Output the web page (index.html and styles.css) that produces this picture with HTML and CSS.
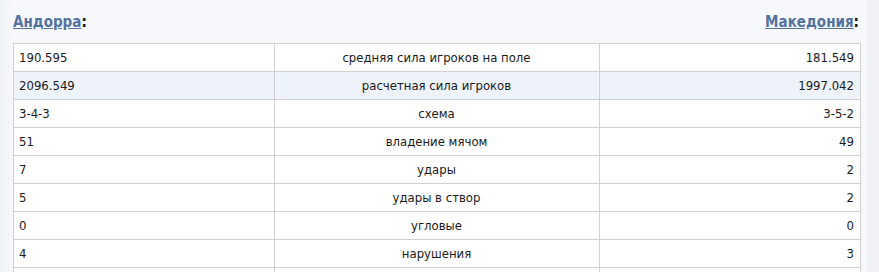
FILE: index.html
```html
<!DOCTYPE html>
<html lang="ru">
<head>
<meta charset="utf-8">
<title>Сравнение команд</title>
<link rel="stylesheet" href="styles.css">
</head>
<body>
<div class="panel">
  <div class="teams">
    <div class="team"><a href="#" class="team-link">Андорра</a>:</div>
    <div class="team"><a href="#" class="team-link">Македония</a>:</div>
  </div>
  <table class="stats">
    <colgroup>
      <col class="c-side">
      <col class="c-mid">
      <col class="c-side">
    </colgroup>
    <tbody>
      <tr><td class="l">190.595</td><td class="m">средняя сила игроков на поле</td><td class="r">181.549</td></tr>
      <tr class="hl"><td class="l">2096.549</td><td class="m">расчетная сила игроков</td><td class="r">1997.042</td></tr>
      <tr><td class="l">3-4-3</td><td class="m">схема</td><td class="r">3-5-2</td></tr>
      <tr><td class="l">51</td><td class="m">владение мячом</td><td class="r">49</td></tr>
      <tr><td class="l">7</td><td class="m">удары</td><td class="r">2</td></tr>
      <tr><td class="l">5</td><td class="m">удары в створ</td><td class="r">2</td></tr>
      <tr><td class="l">0</td><td class="m">угловые</td><td class="r">0</td></tr>
      <tr><td class="l">4</td><td class="m">нарушения</td><td class="r">3</td></tr>
      <tr><td class="l">&nbsp;</td><td class="m">&nbsp;</td><td class="r">&nbsp;</td></tr>
    </tbody>
  </table>
</div>
</body>
</html>
```

FILE: styles.css
```css
html, body {
  margin: 0;
  padding: 0;
}
body {
  background: #eef2f6;
  font-family: "DejaVu Sans Condensed", "DejaVu Sans", sans-serif;
  font-size: 13px;
  color: #1a1a1a;
  height: 272px;
  overflow: hidden;
}
.panel {
  width: 867px;
  height: 272px;
  box-sizing: border-box;
  padding: 0 6px 0 13px;
  background: linear-gradient(to right, #eef2f6 0px, #f6f8fb 12px, #f6f8fb 100%);
}
.teams {
  display: flex;
  justify-content: space-between;
  align-items: flex-start;
  height: 43px;
  box-sizing: border-box;
  padding: 12px 2px 0 0;
  font-weight: bold;
  font-size: 15px;
  color: #111;
}
.team {
  line-height: 20px;
}
.team-link {
  color: #52729f;
  text-decoration: underline;
}
.stats {
  border-collapse: collapse;
  width: 848px;
  background: #fff;
}
.c-side { width: 261px; }
.c-mid { width: 325px; }
.stats td {
  border: 1px solid #d0d0d0;
  height: 27px;
  padding: 0 6px 0 5px;
  vertical-align: middle;
  white-space: nowrap;
}
.stats tr.hl td {
  background: #eef3fa;
}
.l { text-align: left; }
.m { text-align: center; }
.r { text-align: right; }
```
